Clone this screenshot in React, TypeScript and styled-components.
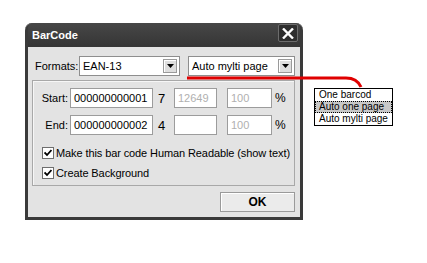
import { FC, ReactElement } from 'react';
import styled, { createGlobalStyle } from 'styled-components';

const GlobalStyle = createGlobalStyle`
  html, body {
    margin: 0;
    padding: 0;
    background: #fff;
  }
  * {
    box-sizing: border-box;
  }
`;

const options = ['One barcod', 'Auto one page', 'Auto mylti page'];

const Arrow: FC = (): ReactElement => (
  <svg width="7" height="4" viewBox="0 0 7 4">
    <path d="M0 0 H7 L3.5 4 Z" fill="#000" />
  </svg>
);

const Check: FC = (): ReactElement => (
  <svg width="8" height="8" viewBox="0 0 8 8">
    <path d="M0.5 3.5 L3 6 L7.5 1" stroke="#000" strokeWidth="1.8" fill="none" />
  </svg>
);

const App: FC = (): ReactElement => {
  return (
    <>
      <GlobalStyle />
      <Canvas>
        <Dialog>
          <TitleBar>
            <Title>BarCode</Title>
            <Close>
              <svg width="12" height="11" viewBox="0 0 12 11">
                <path d="M1 0.5 L11 10.5 M11 0.5 L1 10.5" stroke="#fff" strokeWidth="2.4" />
              </svg>
            </Close>
          </TitleBar>
          <Body>
            <FormatRow>
              <FormatLabel>Formats:</FormatLabel>
              <Combo $width={101}>
                <span>EAN-13</span>
                <DropButton>
                  <Arrow />
                </DropButton>
              </Combo>
              <Combo $width={107} $gap={8}>
                <span>Auto mylti page</span>
                <DropButton>
                  <Arrow />
                </DropButton>
              </Combo>
            </FormatRow>
            <Group>
              <FieldRow>
                <FieldLabel>Start:</FieldLabel>
                <Input $width={83}>000000000001</Input>
                <Digit>7</Digit>
                <Input $width={43} $disabled>
                  12649
                </Input>
                <Input $width={45} $gap={10} $disabled>
                  100
                </Input>
                <Percent>%</Percent>
              </FieldRow>
              <FieldRow>
                <FieldLabel>End:</FieldLabel>
                <Input $width={83}>000000000002</Input>
                <Digit>4</Digit>
                <Input $width={43} $disabled />
                <Input $width={45} $gap={10} $disabled>
                  100
                </Input>
                <Percent>%</Percent>
              </FieldRow>
              <CheckRow $first>
                <CheckBox>
                  <Check />
                </CheckBox>
                Make this bar code Human Readable (show text)
              </CheckRow>
              <CheckRow>
                <CheckBox>
                  <Check />
                </CheckBox>
                Create Background
              </CheckRow>
            </Group>
            <Actions>
              <OkButton>OK</OkButton>
            </Actions>
          </Body>
        </Dialog>

        <Pointer width="427" height="263" viewBox="0 0 427 263">
          <path d="M187 78 H346 Q357 78 361 87" stroke="#e00000" strokeWidth="3" fill="none" />
        </Pointer>

        <Popup>
          {options.map((ele, index) => (
            <Option key={index} $selected={index === 1}>
              {ele}
            </Option>
          ))}
        </Popup>
      </Canvas>
    </>
  );
};

const Canvas = styled.div`
  position: relative;
  width: 427px;
  height: 263px;
  padding: 23px 0 0 25px;
  font-family: 'Liberation Sans', Arial, sans-serif;
  font-size: 11px;
  color: #000;
`;
const Dialog = styled.div`
  width: 278px;
  background: #3a3a3a;
  border-radius: 7px 7px 0 0;
  padding: 0 3px 3px;
  box-shadow: inset 0 1px 0 #6a6a6a;
`;
const TitleBar = styled.div`
  height: 24px;
  display: flex;
  align-items: flex-start;
  justify-content: space-between;
  padding-left: 4px;
  background: linear-gradient(#474747, #353535);
  border-radius: 5px 5px 0 0;
`;
const Title = styled.div`
  margin-top: 6px;
  color: #fff;
  font-weight: bold;
  font-size: 11px;
  line-height: 13px;
`;
const Close = styled.div`
  width: 20px;
  height: 18px;
  margin: 1px 2px 0 0;
  display: flex;
  align-items: center;
  justify-content: center;
  background: #2e2e2e;
  border: 1px solid #6c6c6c;
  border-radius: 2px;
`;
const Body = styled.div`
  height: 170px;
  background: #e3e3e3;
  padding: 9px 5px 0 4px;
`;
const FormatRow = styled.div`
  display: flex;
  align-items: center;
  height: 20px;
  padding-left: 3px;
`;
const FormatLabel = styled.div`
  width: 44px;
  font-size: 11px;
`;
const Combo = styled.div<{ $width: number; $gap?: number }>`
  width: ${(p) => p.$width}px;
  height: 20px;
  margin-left: ${(p) => p.$gap || 0}px;
  display: flex;
  align-items: center;
  justify-content: space-between;
  background: #fff;
  border: 1px solid #8e8e8e;
  padding: 0 2px 0 3px;
`;
const DropButton = styled.div`
  width: 14px;
  height: 14px;
  display: flex;
  align-items: center;
  justify-content: center;
  background: #dedede;
  border: 1px solid #9a9a9a;
  box-shadow: inset 1px 1px 0 #fff;
`;
const Group = styled.div`
  margin-top: 4px;
  height: 106px;
  border: 1px solid #a8a8a8;
  box-shadow: inset 1px 1px 0 #f6f6f6;
  padding: 7px 0 0 0;
  display: flex;
  flex-direction: column;
  gap: 7px;
`;
const FieldRow = styled.div`
  display: flex;
  align-items: center;
  height: 20px;
`;
const FieldLabel = styled.div`
  width: 35px;
  margin-right: 2px;
  text-align: right;
`;
const Input = styled.div<{ $width: number; $gap?: number; $disabled?: boolean }>`
  width: ${(p) => p.$width}px;
  height: 20px;
  margin-left: ${(p) => p.$gap || 0}px;
  background: #fff;
  border: 1px solid #9c9c9c;
  padding-left: 3px;
  line-height: 18px;
  color: ${(p) => (p.$disabled ? '#b0b0b0' : '#000')};
`;
const Digit = styled.div`
  width: 21px;
  padding-left: 5px;
  font-size: 13px;
`;
const Percent = styled.div`
  margin-left: 3px;
  font-size: 12px;
`;
const CheckRow = styled.div<{ $first?: boolean }>`
  display: flex;
  align-items: center;
  gap: 2px;
  height: 16px;
  padding-left: 9px;
  margin-top: ${(p) => (p.$first ? 3 : -3)}px;
  font-size: 11px;
  white-space: nowrap;
  letter-spacing: -0.1px;
`;
const CheckBox = styled.div`
  width: 12px;
  height: 12px;
  flex-shrink: 0;
  display: flex;
  align-items: center;
  justify-content: center;
  background: #fff;
  border: 1px solid #6e6e6e;
`;
const Actions = styled.div`
  display: flex;
  justify-content: flex-end;
  margin-top: 6px;
`;
const OkButton = styled.div`
  width: 75px;
  height: 20px;
  display: flex;
  align-items: center;
  justify-content: center;
  background: #ebebeb;
  border: 1px solid #9a9a9a;
  box-shadow: inset 1px 1px 0 #fff;
  font-weight: bold;
  font-size: 12px;
`;
const Pointer = styled.svg`
  position: absolute;
  left: 0;
  top: 0;
  pointer-events: none;
`;
const Popup = styled.div`
  position: absolute;
  left: 314px;
  top: 88px;
  width: 79px;
  background: #fff;
  border: 1px solid #000;
`;
const Option = styled.div<{ $selected?: boolean }>`
  height: 12px;
  line-height: 12px;
  padding-left: 4px;
  font-size: 10px;
  white-space: nowrap;
  background: ${(p) => (p.$selected ? '#c8c8c8' : '#fff')};
  outline: ${(p) => (p.$selected ? '1px dotted #000' : 'none')};
  outline-offset: -1px;
`;

export default App;
